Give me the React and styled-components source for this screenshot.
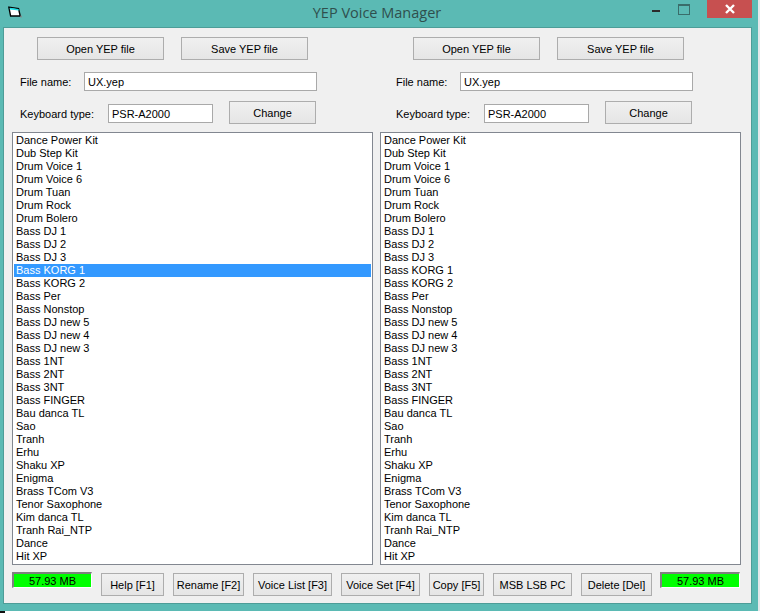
import React from "react";
import styled, { createGlobalStyle } from "styled-components";

const voices = [
  "Dance Power Kit", "Dub Step Kit", "Drum Voice 1", "Drum Voice 6", "Drum Tuan",
  "Drum Rock", "Drum Bolero", "Bass DJ 1", "Bass DJ 2", "Bass DJ 3", "Bass KORG 1",
  "Bass KORG 2", "Bass Per", "Bass Nonstop", "Bass DJ new 5", "Bass DJ new 4",
  "Bass DJ new 3", "Bass 1NT", "Bass 2NT", "Bass 3NT", "Bass FINGER", "Bau danca TL",
  "Sao", "Tranh", "Erhu", "Shaku XP", "Enigma", "Brass TCom V3", "Tenor Saxophone",
  "Kim danca TL", "Tranh Rai_NTP", "Dance", "Hit XP",
];

const footerButtons = [
  { label: "Help [F1]", width: 63 },
  { label: "Rename [F2]", width: 71 },
  { label: "Voice List [F3]", width: 79 },
  { label: "Voice Set [F4]", width: 79 },
  { label: "Copy [F5]", width: 55 },
  { label: "MSB LSB PC", width: 79 },
  { label: "Delete [Del]", width: 71 },
];

const VoicePane = ({ selected, shift }) => (
  <Pane>
    <PaneHeader $shift={shift}>
      <FileButtons>
        <PushButton $width={127}>Open YEP file</PushButton>
        <PushButton $width={127}>Save YEP file</PushButton>
      </FileButtons>
      <NameRow>
        <FieldLabel $width={64}>File name:</FieldLabel>
        <TextBox $width={233} value="UX.yep" readOnly />
      </NameRow>
      <KeyboardRow>
        <FieldLabel $width={88}>Keyboard type:</FieldLabel>
        <KeyboardBox $width={105} value="PSR-A2000" readOnly />
        <ChangeButton $width={87}>Change</ChangeButton>
      </KeyboardRow>
    </PaneHeader>
    <VoiceList>
      {voices.map((name, index) => (
        <VoiceItem key={name} $selected={index === selected}>
          {name}
        </VoiceItem>
      ))}
    </VoiceList>
  </Pane>
);

export default function App() {
  return (
    <>
      <GlobalStyle />
      <Frame>
        <TitleBar>
          <AppIcon viewBox="0 0 16 16">
            <path d="M1 1.5 L12 3 L14 11.5 L3 11.5 Z" fill="#fff" stroke="#000" strokeWidth="1.6" />
            <path d="M2 2 L12 3.5 L12.5 5 L2 4 Z" fill="#19dfe6" />
            <rect x="14" y="11" width="3" height="2" fill="#7f8f8e" />
          </AppIcon>
          <Title>YEP Voice Manager</Title>
          <WindowControls>
            <MinimizeButton />
            <MaximizeButton />
            <CloseButton>
              <svg width="12" height="10" viewBox="0 0 12 10">
                <path d="M2 1 L10 9 M10 1 L2 9" stroke="#fff" strokeWidth="2.4" />
              </svg>
            </CloseButton>
          </WindowControls>
        </TitleBar>
        <Client>
          <Panes>
            <VoicePane selected={10} shift={0} />
            <VoicePane selected={-1} shift={8} />
          </Panes>
          <Footer>
            <MemoryMeter>57.93 MB</MemoryMeter>
            <FooterButtons>
              {footerButtons.map((b) => (
                <PushButton key={b.label} $width={b.width}>
                  {b.label}
                </PushButton>
              ))}
            </FooterButtons>
            <MemoryMeter>57.93 MB</MemoryMeter>
          </Footer>
        </Client>
      </Frame>
      <BelowWindow />
    </>
  );
}

const GlobalStyle = createGlobalStyle`
  html, body {
    margin: 0;
    padding: 0;
    background: #e4e9eb;
    overflow: hidden;
  }
  body {
    font-family: "Liberation Sans", Arial, sans-serif;
    font-size: 11px;
    color: #000;
  }
`;

const Frame = styled.div`
  width: 758px;
  height: 611px;
  background: #5bbab4;
  display: flex;
  flex-direction: column;
  overflow: hidden;
`;

const BelowWindow = styled.div`
  height: 2px;
  background: linear-gradient(90deg, #111 5px, #fff 5px);
`;

const TitleBar = styled.div`
  height: 27px;
  flex: none;
  display: grid;
  grid-template-columns: 1fr auto 1fr;
`;

const AppIcon = styled.svg`
  width: 14px;
  height: 14px;
  margin: 6px 0 0 8px;
`;

const Title = styled.div`
  font-family: "Open Sans", "Noto Sans", sans-serif;
  font-size: 14.5px;
  line-height: 26px;
  color: #2f4f4d;
  margin-left: -4px;
`;

const WindowControls = styled.div`
  justify-self: end;
  display: flex;
  align-items: flex-start;
  margin-right: 6px;
`;

const MinimizeButton = styled.div`
  width: 8px;
  height: 2px;
  margin: 10px 18px 0 0;
  background: #2b2b2b;
`;

const MaximizeButton = styled.div`
  width: 10px;
  height: 8px;
  margin: 4px 17px 0 0;
  border: 1px solid #3a6d6a;
  border-top-width: 2px;
`;

const CloseButton = styled.div`
  width: 45px;
  height: 18px;
  background: #c75050;
  display: flex;
  align-items: center;
  justify-content: center;
`;

const Client = styled.div`
  width: 749px;
  height: 577px;
  box-sizing: border-box;
  margin-left: 3px;
  padding: 0 0 0 8px;
  background: #f0f0f0;
  border: 1px solid #4d9d98;
`;

const Panes = styled.div`
  display: grid;
  grid-template-columns: 361px 361px;
  column-gap: 7px;
`;

const Pane = styled.div`
  display: flex;
  flex-direction: column;
  padding-top: 9px;
`;

const PaneHeader = styled.div`
  padding-left: ${(p) => p.$shift}px;
`;

const FileButtons = styled.div`
  display: flex;
  gap: 17px;
  padding-left: 25px;
`;

const PushButton = styled.button`
  width: ${(p) => p.$width}px;
  height: 23px;
  flex: none;
  padding: 0;
  box-sizing: border-box;
  border: 1px solid #adadad;
  background: linear-gradient(#f0f0f0, #e5e5e5);
  font: inherit;
  color: #000;
  white-space: nowrap;
`;

const NameRow = styled.div`
  display: flex;
  align-items: center;
  height: 19px;
  margin-top: 12px;
  padding-left: 8px;
`;

const KeyboardRow = styled.div`
  display: flex;
  align-items: flex-end;
  height: 23px;
  margin-top: 10px;
  padding-left: 8px;
`;

const FieldLabel = styled.span`
  width: ${(p) => p.$width}px;
  flex: none;
  line-height: 19px;
  padding-top: 2px;
`;

const TextBox = styled.input`
  width: ${(p) => p.$width}px;
  height: 19px;
  flex: none;
  box-sizing: border-box;
  padding: 0 3px;
  border: 1px solid #a9a9a9;
  background: #fff;
  font: inherit;
  color: #000;
  outline: none;
`;

const KeyboardBox = styled(TextBox)`
  margin-bottom: 1px;
`;

const ChangeButton = styled(PushButton)`
  margin-left: 16px;
`;

const VoiceList = styled.ul`
  list-style: none;
  margin: 8px 0 0;
  padding: 1px 1px 0;
  height: 433px;
  box-sizing: border-box;
  border: 1px solid #828790;
  background: #fff;
  overflow: hidden;
`;

const VoiceItem = styled.li`
  height: 13px;
  line-height: 13px;
  padding-left: 2px;
  white-space: nowrap;
  background: ${(p) => (p.$selected ? "#3399ff" : "transparent")};
  color: ${(p) => (p.$selected ? "#fff" : "#000")};
`;

const Footer = styled.div`
  display: flex;
  align-items: flex-start;
  margin-top: 7px;
  gap: 9px;
`;

const FooterButtons = styled.div`
  display: flex;
  gap: 9px;
  margin-top: 1px;
  margin-right: -1px;
`;

const MemoryMeter = styled.div`
  width: 80px;
  height: 16px;
  flex: none;
  box-sizing: border-box;
  background: #00ff00;
  border-style: solid;
  border-width: 2px 1px 1px 2px;
  border-color: #808080 #fff #fff #808080;
  text-align: center;
  line-height: 14px;
`;
